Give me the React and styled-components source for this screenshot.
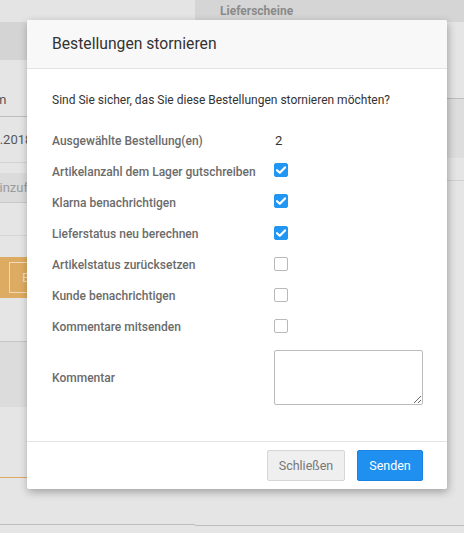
import React, { useState } from "react";
import styled, { createGlobalStyle } from "styled-components";

const GlobalStyle = createGlobalStyle`
  html, body {
    margin: 0;
    padding: 0;
    height: 100%;
  }
  body {
    font-family: Roboto, "Liberation Sans", Arial, sans-serif;
    background: #e5e5e5;
    overflow: hidden;
  }
  * {
    box-sizing: border-box;
  }
`;

// ---- dimmed page behind the dialog ----

const Page = styled.div`
  position: relative;
  height: 100vh;
  display: grid;
  grid-template-columns: 195px 1fr;
  color: #555;
  font-size: 13px;
`;

const Column = styled.div`
  display: flex;
  flex-direction: column;
  overflow: hidden;
`;

const Band = styled.div`
  flex: none;
  height: ${props => props.h}px;
  background: ${props => props.bg || "transparent"};
  border-bottom: ${props => (props.line ? `1px solid ${props.line}` : "none")};
  display: flex;
  align-items: ${props => props.align || "center"};
  padding-bottom: ${props => props.pb || 0}px;
  white-space: nowrap;
`;

const Shifted = styled.span`
  margin-left: ${props => props.shift}px;
  color: ${props => props.color || "#555"};
  font-size: 13px;
`;

const TabLabel = styled.span`
  padding-left: 25px;
  font-size: 12px;
  font-weight: 700;
  color: #8a8a8a;
`;

const GhostButton = styled.div`
  margin-left: 9px;
  height: 31px;
  width: 90px;
  border: 1px solid rgba(255, 255, 255, 0.55);
  color: #f3dfc4;
  font-size: 13px;
  display: flex;
  align-items: center;
  padding-left: 12px;
`;

// ---- dialog ----

const Dialog = styled.div`
  position: absolute;
  left: 27px;
  top: 20px;
  width: 420px;
  background: #fff;
  border-radius: 2px;
  box-shadow: 1px 3px 8px rgba(0, 0, 0, 0.3);
  display: flex;
  flex-direction: column;
`;

const Header = styled.div`
  height: 49px;
  background: #f8f8f8;
  border-bottom: 1px solid #e3e3e3;
  display: flex;
  align-items: center;
  padding: 0 25px 1px;
  border-radius: 2px 2px 0 0;
`;

const Title = styled.h4`
  margin: 0;
  font-size: 15.7px;
  font-weight: 400;
  color: #333;
`;

const Body = styled.div`
  padding: 22px 24px 36px 25px;
  display: flex;
  flex-direction: column;
`;

const Intro = styled.p`
  margin: 0 0 16px;
  font-size: 12px;
  line-height: 18px;
  color: #333;
`;

const Form = styled.div`
  display: grid;
  grid-template-columns: 222px 1fr;
  grid-auto-rows: 31px;
  align-items: center;
`;

const Label = styled.span`
  font-size: 12px;
  font-weight: 500;
  color: #6b6b6b;
`;

const Value = styled.span`
  font-size: 13px;
  color: #333;
  padding-left: 1px;
`;

const Box = styled.span`
  width: 14px;
  height: 14px;
  border-radius: 2px;
  margin-top: ${props => props.dy || 0}px;
  background: ${props => (props.checked ? "#2196f3" : "#fff")};
  border: 1px solid ${props => (props.checked ? "#2196f3" : "#b9b9b9")};
  display: flex;
  align-items: center;
  justify-content: center;
  cursor: pointer;
`;

const CommentRow = styled.div`
  display: grid;
  grid-template-columns: 222px 1fr;
  align-items: center;
  margin-top: 8px;
`;

const Textarea = styled.textarea`
  width: 149px;
  height: 55px;
  border: 1px solid #bbb;
  border-radius: 2px;
  font-family: inherit;
  font-size: 13px;
  padding: 4px 6px;
  outline: none;
  resize: both;
`;

const Footer = styled.div`
  height: 48px;
  border-top: 1px solid #e3e3e3;
  display: flex;
  justify-content: flex-end;
  align-items: flex-start;
  gap: 12px;
  padding: 8px 24px 0 0;
`;

const Button = styled.button`
  height: 31px;
  width: ${props => props.w}px;
  font-family: inherit;
  font-size: 12.5px;
  border-radius: 2px;
  cursor: pointer;
  color: ${props => (props.primary ? "#fff" : "#777")};
  background: ${props => (props.primary ? "#1f8ff0" : "#efefef")};
  border: 1px solid ${props => (props.primary ? "#1a82e0" : "#d6d6d6")};
`;

const Check = () => (
  <svg width="10" height="8" viewBox="0 0 10 8">
    <path d="M1 4.2 L3.8 6.8 L9 1.4" fill="none" stroke="#fff" strokeWidth="2.2" strokeLinecap="round" strokeLinejoin="round" />
  </svg>
);

const Checkbox = ({ checked, onToggle, dy }) => (
  <Box checked={checked} onClick={onToggle} dy={dy}>
    {checked && <Check />}
  </Box>
);

const options = [
  { key: "stock", label: "Artikelanzahl dem Lager gutschreiben", on: true, dy: -4 },
  { key: "klarna", label: "Klarna benachrichtigen", on: true, dy: -4 },
  { key: "delivery", label: "Lieferstatus neu berechnen", on: true, dy: -1 },
  { key: "status", label: "Artikelstatus zurücksetzen", on: false, dy: -1 },
  { key: "customer", label: "Kunde benachrichtigen", on: false, dy: -1 },
  { key: "comments", label: "Kommentare mitsenden", on: false, dy: -2 },
];

const App = () => {
  const [checks, setChecks] = useState(
    options.reduce((acc, o) => ({ ...acc, [o.key]: o.on }), {})
  );
  const [comment, setComment] = useState("");

  const toggle = key => setChecks({ ...checks, [key]: !checks[key] });

  return (
    <>
      <GlobalStyle />
      <Page>
        <Column>
          <Band h={22} bg="#e4e4e4" />
          <Band h={38} bg="#d4d4d4" />
          <Band h={57} bg="#e5e5e5" line="#bdbdbd" align="flex-end" pb={9}>
            <Shifted shift={-70}>Bestelldatum</Shifted>
          </Band>
          <Band h={46} line="#d2d2d2">
            <Shifted shift={-33}>08.05.2018</Shifted>
          </Band>
          <Band h={10} />
          <Band h={30} bg="#dbdbdb" line="#c8c8c8">
            <Shifted shift={-48} color="#9a9a9a">Artikel hinzufügen</Shifted>
          </Band>
          <Band h={33} line="#d6d6d6" />
          <Band h={21} />
          <Band h={41} bg="#deab62">
            <GhostButton>Bearbeiten</GhostButton>
          </Band>
          <Band h={44} line="#c5c5c5" />
          <Band h={65} bg="#dcdcdc" />
          <Band h={71} line="#dcaa62" />
          <Band h={47} line="#bdbdbd" />
        </Column>
        <Column>
          <Band h={22} bg="#d5d5d5">
            <TabLabel>Lieferscheine</TabLabel>
          </Band>
          <Band h={77} bg="#e5e5e5" line="#bdbdbd" />
          <Band h={59} bg="#dddddd" />
          <Band h={23} line="#d0d0d0" />
          <Band h={345} line="#bdbdbd" />
        </Column>

        <Dialog>
          <Header>
            <Title>Bestellungen stornieren</Title>
          </Header>
          <Body>
            <Intro>Sind Sie sicher, das Sie diese Bestellungen stornieren möchten?</Intro>
            <Form>
              <Label>Ausgewählte Bestellung(en)</Label>
              <Value>2</Value>
              {options.map(o => (
                <React.Fragment key={o.key}>
                  <Label>{o.label}</Label>
                  <Checkbox checked={checks[o.key]} onToggle={() => toggle(o.key)} dy={o.dy} />
                </React.Fragment>
              ))}
            </Form>
            <CommentRow>
              <Label>Kommentar</Label>
              <Textarea value={comment} onChange={e => setComment(e.target.value)} />
            </CommentRow>
          </Body>
          <Footer>
            <Button w={78}>Schließen</Button>
            <Button w={66} primary>Senden</Button>
          </Footer>
        </Dialog>
      </Page>
    </>
  );
};

export default App;
